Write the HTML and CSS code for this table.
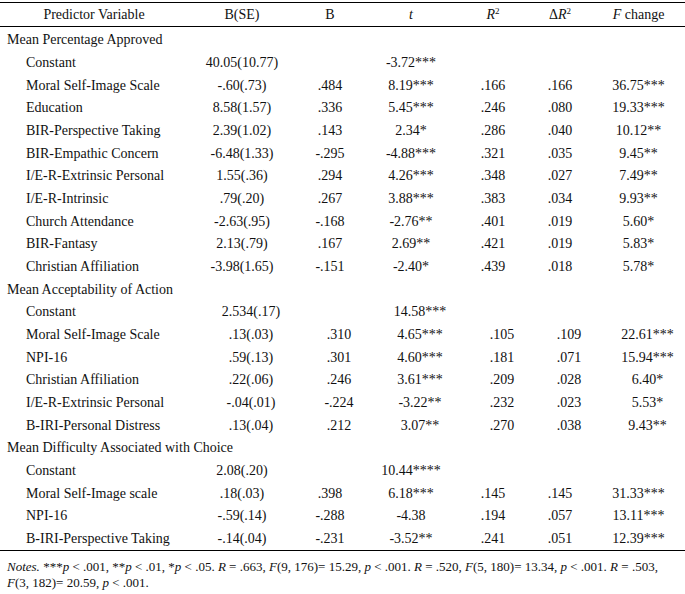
FILE: index.html
```html
<!DOCTYPE html>
<html>
<head>
<meta charset="utf-8">
<link rel="stylesheet" href="styles.css">
</head>
<body>
<table class="tbl">
  <colgroup>
    <col class="c1"><col class="c2"><col class="c3"><col class="c4"><col class="c5"><col class="c6"><col class="c7">
  </colgroup>
  <thead>
    <tr class="head">
      <th>Predictor Variable</th>
      <th>B(SE)</th>
      <th>B</th>
      <th><i>t</i></th>
      <th><i>R</i><sup>2</sup></th>
      <th>Δ<i>R</i><sup>2</sup></th>
      <th><i>F</i> change</th>
    </tr>
  </thead>
  <tbody>
    <tr class="group"><td colspan="7">Mean Percentage Approved</td></tr>
    <tr><td class="sub">Constant</td><td>40.05(10.77)</td><td></td><td>-3.72***</td><td></td><td></td><td></td></tr>
    <tr><td class="sub">Moral Self-Image Scale</td><td>-.60(.73)</td><td>.484</td><td>8.19***</td><td>.166</td><td>.166</td><td>36.75***</td></tr>
    <tr><td class="sub">Education</td><td>8.58(1.57)</td><td>.336</td><td>5.45***</td><td>.246</td><td>.080</td><td>19.33***</td></tr>
    <tr><td class="sub">BIR-Perspective Taking</td><td>2.39(1.02)</td><td>.143</td><td>2.34*</td><td>.286</td><td>.040</td><td>10.12**</td></tr>
    <tr><td class="sub">BIR-Empathic Concern</td><td>-6.48(1.33)</td><td>-.295</td><td>-4.88***</td><td>.321</td><td>.035</td><td>9.45**</td></tr>
    <tr><td class="sub">I/E-R-Extrinsic Personal</td><td>1.55(.36)</td><td>.294</td><td>4.26***</td><td>.348</td><td>.027</td><td>7.49**</td></tr>
    <tr><td class="sub">I/E-R-Intrinsic</td><td>.79(.20)</td><td>.267</td><td>3.88***</td><td>.383</td><td>.034</td><td>9.93**</td></tr>
    <tr><td class="sub">Church Attendance</td><td>-2.63(.95)</td><td>-.168</td><td>-2.76**</td><td>.401</td><td>.019</td><td>5.60*</td></tr>
    <tr><td class="sub">BIR-Fantasy</td><td>2.13(.79)</td><td>.167</td><td>2.69**</td><td>.421</td><td>.019</td><td>5.83*</td></tr>
    <tr><td class="sub">Christian Affiliation</td><td>-3.98(1.65)</td><td>-.151</td><td>-2.40*</td><td>.439</td><td>.018</td><td>5.78*</td></tr>
    <tr class="group"><td colspan="7">Mean Acceptability of Action</td></tr>
    <tr class="shift"><td class="sub">Constant</td><td>2.534(.17)</td><td></td><td>14.58***</td><td></td><td></td><td></td></tr>
    <tr class="shift"><td class="sub">Moral Self-Image Scale</td><td>.13(.03)</td><td>.310</td><td>4.65***</td><td>.105</td><td>.109</td><td>22.61***</td></tr>
    <tr class="shift"><td class="sub">NPI-16</td><td>.59(.13)</td><td>.301</td><td>4.60***</td><td>.181</td><td>.071</td><td>15.94***</td></tr>
    <tr class="shift"><td class="sub">Christian Affiliation</td><td>.22(.06)</td><td>.246</td><td>3.61***</td><td>.209</td><td>.028</td><td>6.40*</td></tr>
    <tr class="shift"><td class="sub">I/E-R-Extrinsic Personal</td><td>-.04(.01)</td><td>-.224</td><td>-3.22**</td><td>.232</td><td>.023</td><td>5.53*</td></tr>
    <tr class="shift"><td class="sub">B-IRI-Personal Distress</td><td>.13(.04)</td><td>.212</td><td>3.07**</td><td>.270</td><td>.038</td><td>9.43**</td></tr>
    <tr class="group"><td colspan="7">Mean Difficulty Associated with Choice</td></tr>
    <tr><td class="sub">Constant</td><td>2.08(.20)</td><td></td><td>10.44****</td><td></td><td></td><td></td></tr>
    <tr><td class="sub">Moral Self-Image scale</td><td>.18(.03)</td><td>.398</td><td>6.18***</td><td>.145</td><td>.145</td><td>31.33***</td></tr>
    <tr><td class="sub">NPI-16</td><td>-.59(.14)</td><td>-.288</td><td>-4.38</td><td>.194</td><td>.057</td><td>13.11***</td></tr>
    <tr class="last"><td class="sub">B-IRI-Perspective Taking</td><td>-.14(.04)</td><td>-.231</td><td>-3.52**</td><td>.241</td><td>.051</td><td>12.39***</td></tr>
  </tbody>
</table>
<p class="notes"><i>Notes.</i> ***<i>p</i> &lt; .001, **<i>p</i> &lt; .01, *<i>p</i> &lt; .05. <i>R</i> = .663, <i>F</i>(9, 176)= 15.29, <i>p</i> &lt; .001. <i>R</i> = .520, <i>F</i>(5, 180)= 13.34, <i>p</i> &lt; .001. <i>R</i> = .503,<br><i>F</i>(3, 182)= 20.59, <i>p</i> &lt; .001.</p>
</body>
</html>
```

FILE: styles.css
```css
html, body {
  margin: 0;
  padding: 0;
  background: #ffffff;
}

body {
  font-family: "Liberation Serif", "Times New Roman", serif;
  font-size: 14px;
  color: #111111;
}

.tbl {
  width: 685px;
  margin-top: 2px;
  border-collapse: collapse;
  table-layout: fixed;
}

.c1 { width: 188px; }
.c2 { width: 108px; }
.c3 { width: 68px; }
.c4 { width: 94px; }
.c5 { width: 70px; }
.c6 { width: 64px; }
.c7 { width: 93px; }

.head th {
  font-weight: normal;
  text-align: center;
  height: 23px;
  padding: 0;
  border-top: 1px solid #000;
  border-bottom: 1px solid #000;
  line-height: 16px;
}

.head sup {
  font-size: 9px;
  line-height: 0;
  vertical-align: 5px;
}

tbody td {
  height: 22.68px;
  padding: 0;
  text-align: center;
  white-space: nowrap;
  line-height: 16px;
}

tbody tr:first-child td {
  padding-top: 2px;
}

.group td {
  text-align: left;
  padding-left: 7px;
}

td.sub {
  text-align: left;
  padding-left: 26px;
}

.shift td {
  padding-left: 18px;
}

.shift td.sub {
  padding-left: 26px;
}

.last td {
  border-bottom: 1px solid #000;
}

.notes {
  margin: 8px 0 0 7px;
  font-size: 13px;
  line-height: 16px;
}
```
